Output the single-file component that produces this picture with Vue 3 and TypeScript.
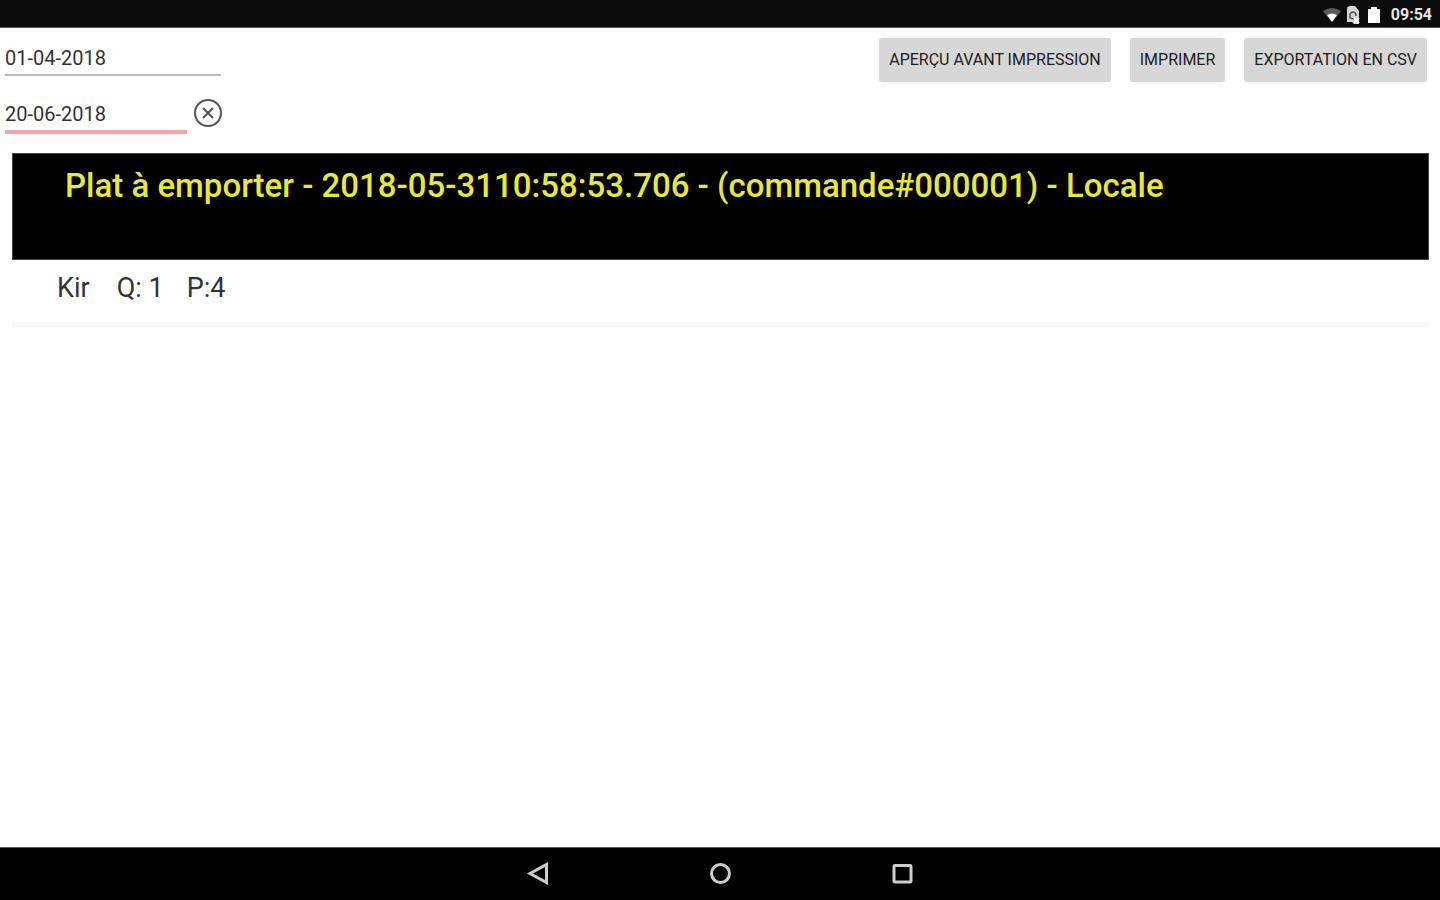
<script setup lang="ts">
import { ref } from 'vue'

interface OrderLine {
  name: string
  quantity: number
  price: number
}

const startDate = ref('01-04-2018')
const endDate = ref('20-06-2018')
const orderTitle = 'Plat à emporter - 2018-05-3110:58:53.706 - (commande#000001) - Locale'
const lines: OrderLine[] = [{ name: 'Kir', quantity: 1, price: 4 }]
</script>

<template>
  <div class="screen">
    <header class="status">
      <svg class="wifi" viewBox="0 0 20 16" aria-hidden="true">
        <path d="M1 4Q10-2 19 4L10 15Z" fill="#5c5c5c" />
        <path d="M5 8Q10 5 15 8L10 15Z" fill="#fff" />
      </svg>
      <svg class="sim" viewBox="0 0 16 20" aria-hidden="true">
        <path d="M2 4Q2 1 5 1H10L14 6V19H9L7 17H2Z" fill="#d4d4d4" />
        <path d="M5 9Q8 5 11 9V11M5 9V13L9 14" fill="none" stroke="#555" stroke-width="1.6" />
        <path d="M9 13L14 18M14 13L9 18" stroke="#fff" stroke-width="1.8" />
      </svg>
      <svg class="battery" viewBox="0 0 14 18" aria-hidden="true">
        <path d="M4 1H10V3H13V17H1V3H4Z" fill="#fff" />
      </svg>
      <time class="clock">09:54</time>
    </header>

    <main class="content">
      <div class="toolbar">
        <form class="dates" @submit.prevent>
          <input v-model="startDate" class="date" type="text" aria-label="Date de début" />
          <div class="end-row">
            <input v-model="endDate" class="date active" type="text" aria-label="Date de fin" />
            <button class="clear" type="button" aria-label="Effacer" @click="endDate = ''">
              <svg viewBox="0 0 30 30" aria-hidden="true">
                <circle cx="15" cy="15" r="13" />
                <path d="M10 10L20 20M20 10L10 20" />
              </svg>
            </button>
          </div>
        </form>
        <div class="actions">
          <button class="action" type="button">APERÇU AVANT IMPRESSION</button>
          <button class="action" type="button">IMPRIMER</button>
          <button class="action" type="button">EXPORTATION EN CSV</button>
        </div>
      </div>

      <section class="order">
        <h1 class="order-title">{{ orderTitle }}</h1>
        <ul class="lines">
          <li v-for="line in lines" :key="line.name" class="line">
            <span class="name">{{ line.name }}</span>
            <span>Q: {{ line.quantity }}</span>
            <span>P:{{ line.price }}</span>
          </li>
        </ul>
      </section>
    </main>

    <nav class="navbar">
      <button class="nav" type="button" aria-label="Retour">
        <svg viewBox="0 0 24 24" aria-hidden="true"><path d="M20.5 2.5V20.5L4 11.5Z" /></svg>
      </button>
      <button class="nav" type="button" aria-label="Accueil">
        <svg viewBox="0 0 24 24" aria-hidden="true"><circle cx="12.5" cy="11.5" r="9" /></svg>
      </button>
      <button class="nav" type="button" aria-label="Applications récentes">
        <svg viewBox="0 0 24 24" aria-hidden="true"><rect x="4" y="3.5" width="17" height="16.5" rx="1" /></svg>
      </button>
    </nav>
  </div>
</template>

<style>
body {
  margin: 0;
}
</style>

<style scoped>
.screen {
  display: flex;
  flex-direction: column;
  min-height: 100vh;
  background: #fefefe;
  color: #333;
  font-family: Roboto, "Liberation Sans", sans-serif;
}

.screen *,
.screen {
  box-sizing: border-box;
}

button {
  border: 0;
  font-family: inherit;
  cursor: pointer;
}

.status {
  display: flex;
  align-items: center;
  justify-content: flex-end;
  height: 28px;
  padding: 2px 8px 0 0;
  background: #0b0b0b;
  border-bottom: 1px solid #555;
  color: #e4e4e4;
}

.wifi {
  width: 20px;
  height: 16px;
  margin-right: 3px;
}

.sim {
  width: 16px;
  height: 20px;
  margin-right: 6px;
}

.battery {
  width: 14px;
  height: 18px;
  margin-right: 10px;
}

.clock {
  font-size: 16px;
  line-height: 20px;
  font-weight: 700;
}

.content {
  flex: 1;
}

.toolbar {
  display: flex;
  justify-content: space-between;
  align-items: flex-start;
  padding: 10px 13px 0 5px;
}

.dates {
  display: flex;
  flex-direction: column;
  gap: 18px;
  width: 218px;
}

.date {
  width: 216px;
  height: 38px;
  padding: 4px 0 0;
  border: 0;
  border-bottom: 2px solid #bbb;
  border-radius: 0;
  outline: 0;
  background: transparent;
  color: #333;
  font-family: inherit;
  font-size: 20px;
}

.end-row {
  display: flex;
  align-items: flex-start;
  justify-content: space-between;
}

.date.active {
  width: 182px;
  height: 40px;
  border-bottom: 4px solid #f4a3a6;
}

.clear {
  width: 30px;
  height: 30px;
  margin-top: 4px;
  padding: 0;
  background: transparent;
}

.clear svg,
.nav svg {
  display: block;
  width: 100%;
  height: 100%;
  fill: none;
}

.clear svg {
  stroke: #555;
  stroke-width: 2;
}

.actions {
  display: flex;
  gap: 19px;
}

.action {
  height: 44px;
  padding: 0 10px 2px;
  border-radius: 3px;
  background: #d7d7d7;
  color: #1c1c1c;
  font-size: 16px;
  font-weight: 400;
}

.order {
  margin: 19px 11px 0 12px;
}

.order-title {
  min-height: 107px;
  margin: 0;
  padding: 11px 52px;
  border: 1px solid #444;
  background: #000;
  color: #e8e83a;
  font-size: 33px;
  line-height: 42px;
  font-weight: 500;
}

.lines {
  margin: 0;
  padding: 0;
  list-style: none;
}

.line {
  display: flex;
  gap: 23px;
  height: 67px;
  padding: 10px 45px;
  border-bottom: 5px solid #f8f8f8;
  font-size: 27px;
  line-height: 36px;
}

.name {
  margin-right: 4px;
}

.navbar {
  display: flex;
  justify-content: center;
  align-items: center;
  gap: 158px;
  height: 53px;
  border-top: 1px solid #555;
  background: #000;
}

.nav {
  width: 24px;
  height: 24px;
  padding: 0;
  background: transparent;
}

.nav svg {
  stroke: #ccc;
  stroke-width: 3;
}
</style>
